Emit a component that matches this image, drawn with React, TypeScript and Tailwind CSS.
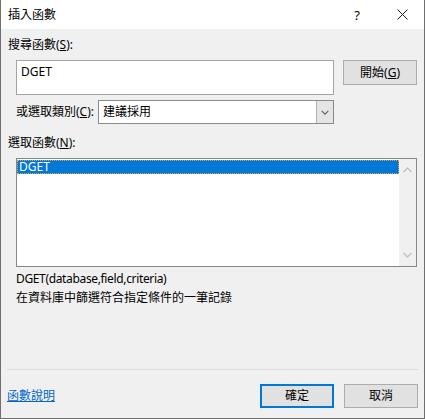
const font = { fontFamily: '"Noto Sans", "Noto Sans CJK TC", sans-serif' };

function Chevron({ up, className }: { up?: boolean; className?: string }) {
    return (
        <svg width="9" height="6" viewBox="0 0 9 6" className={className}>
            <path
                d={up ? 'M0.5 5 L4.5 1 L8.5 5' : 'M0.5 1 L4.5 5 L8.5 1'}
                fill="none"
                stroke="currentColor"
                strokeWidth="1.4"
            />
        </svg>
    );
}

export default function App() {
    return (
        <div
            className="w-[425px] h-[419px] flex flex-col bg-[#f0f0f0] border-x border-b border-[#6f6f6f] text-[12px] leading-[16px] text-black"
            style={font}
        >
            {/* Title bar */}
            <div className="h-[29px] shrink-0 bg-white flex items-center pl-[7px]">
                <span className="flex-1">插入函數</span>
                <span className="w-[10px] text-center text-[13px] mr-[35px]">?</span>
                <svg width="11" height="11" viewBox="0 0 11 11" className="mr-[16px] text-[#1a1a1a]">
                    <path d="M0.5 0.5 L10.5 10.5 M10.5 0.5 L0.5 10.5" stroke="currentColor" strokeWidth="1" fill="none" />
                </svg>
            </div>

            <div className="flex flex-col px-[7px]">
                <div className="mt-[8px]">
                    搜尋函數(<span className="underline">S</span>):
                </div>

                <div className="mt-[7px] flex items-start pl-[8px]">
                    <div className="w-[318px] h-[35px] bg-white border border-[#a5a5a5] px-[4px] pt-[3px]">DGET</div>
                    <button className="ml-[9px] w-[74px] h-[25px] bg-[#e1e1e1] border border-[#adadad] flex items-center justify-center">
                        開始(<span className="underline">G</span>)
                    </button>
                </div>

                <div className="mt-[5px] flex items-center pl-[8px]">
                    <span className="w-[82px]">
                        或選取類別(<span className="underline">C</span>):
                    </span>
                    <div className="w-[236px] h-[24px] bg-white border border-[#8a8a8a] flex items-stretch">
                        <span className="flex-1 flex items-center pl-[4px]">建議採用</span>
                        <span className="w-[17px] bg-[#e5e5e5] border-l border-[#b0b0b0] flex items-center justify-center text-[#606060]">
                            <Chevron className="w-[8px] h-[5px]" />
                        </span>
                    </div>
                </div>

                <div className="mt-[11px]">
                    選取函數(<span className="underline">N</span>):
                </div>

                <div className="mt-[7px] ml-[8px] w-[401px] h-[109px] bg-white border border-[#828790] flex">
                    <div className="flex-1 pt-[1px]">
                        <div className="h-[14px] bg-[#0078d7] text-white outline-1 outline-dotted outline-[#f0a040] -outline-offset-1 pl-[2px] leading-[14px]">
                            DGET
                        </div>
                    </div>
                    <div className="w-[17px] bg-[#f0f0f0] flex flex-col items-center justify-between py-[8px] text-[#c2c2c2]">
                        <Chevron up />
                        <Chevron />
                    </div>
                </div>

                <div className="mt-[4px] pl-[8px] tracking-[-0.35px]">DGET(database,field,criteria)</div>
                <div className="mt-[3px] pl-[8px]">在資料庫中篩選符合指定條件的一筆記錄</div>
            </div>

            <div className="flex-1" />

            <div className="mx-[6px] h-px bg-[#dcdcdc]" />

            <div className="flex items-center px-[6px] pt-[14px] pb-[10px]">
                <a className="flex-1 text-[#0066cc] underline cursor-pointer">函數說明</a>
                <button className="w-[74px] h-[24px] bg-[#e1e1e1] border-2 border-[#0078d7] flex items-center justify-center">
                    確定
                </button>
                <button className="ml-[10px] w-[74px] h-[24px] bg-[#e1e1e1] border border-[#adadad] flex items-center justify-center">
                    取消
                </button>
            </div>
        </div>
    );
}
